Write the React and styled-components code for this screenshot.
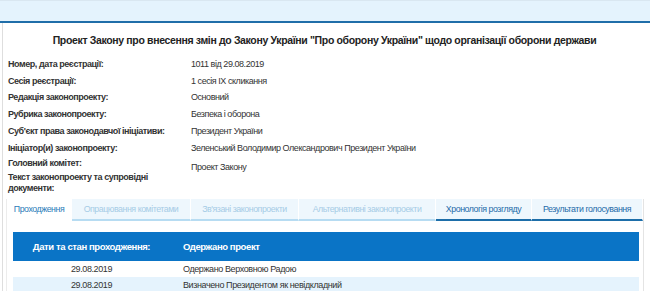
import React from 'react';
import styled, { createGlobalStyle } from 'styled-components';

const GlobalStyle = createGlobalStyle`
  html, body {
    margin: 0;
    padding: 0;
    background: #ffffff;
  }
  body {
    font-family: 'Liberation Sans', Arial, Helvetica, sans-serif;
    color: #333;
  }
`;

const Page = styled.div`
  width: 650px;
  height: 291px;
  overflow: hidden;
  background: #fff;
`;

const TopBar = styled.div`
  height: 20px;
  background: #e4f3fd;
  border-top: 1px solid #d9e7f1;
  border-bottom: 2px solid #1f6ea9;
`;

const Main = styled.div`
  margin-left: 2px;
  margin-right: 4px;
  border-left: 1px solid #dedede;
  padding: 10px 0 0 0;
`;

const Title = styled.h1`
  margin: 0 0 9px;
  text-align: center;
  font-size: 10.5px;
  letter-spacing: -0.35px;
  line-height: 14px;
  font-weight: bold;
  color: #222;
  white-space: nowrap;
`;

const InfoGrid = styled.div`
  display: grid;
  grid-template-columns: 183px 1fr;
  padding-left: 5px;
  font-size: 9px;
  letter-spacing: -0.45px;
`;

const Label = styled.div`
  font-weight: bold;
  color: #333;
  line-height: ${p => p.$lh || '16.7px'};
  padding-top: ${p => p.$offset || 0};
`;

const Value = styled.div`
  color: #333;
  line-height: 16.7px;
  padding-top: ${p => p.$offset || 0};
`;

const Stack = styled.div`
  display: flex;
  flex-direction: column;
`;

const TabsBox = styled.div`
  margin: 6px 2px 0 3px;
  border-left: 1px solid #ececec;
  border-right: 1px solid #e4e4e4;
`;

const TabStrip = styled.div`
  display: flex;
`;

const Tab = styled.div`
  flex: none;
  width: ${p => p.$w}px;
  height: 22px;
  box-sizing: border-box;
  display: flex;
  align-items: center;
  justify-content: center;
  font-size: 8.8px;
  letter-spacing: -0.45px;
  white-space: nowrap;
  border-right: 1px solid #fff;
  background: ${p => (p.$kind === 'active' ? '#fff' : '#eef7fd')};
  color: ${p =>
    p.$kind === 'active' ? '#2a7bb9' : p.$kind === 'dark' ? '#1d6aa9' : '#a6cce6'};
  border-bottom: 2px solid
    ${p => (p.$kind === 'active' ? '#fff' : p.$kind === 'dark' ? '#1d6ea9' : '#b7dcf2')};
`;

const Table = styled.div`
  margin: 11px 4px 0 6px;
  font-size: 9px;
  letter-spacing: -0.4px;
`;

const HeadRow = styled.div`
  display: grid;
  grid-template-columns: 157px 1fr;
  height: 29px;
  align-items: center;
  background: #0a74c6;
  color: #fff;
  font-weight: bold;
  font-size: 9.5px;
`;

const Row = styled.div`
  display: grid;
  grid-template-columns: 157px 1fr;
  height: 16px;
  align-items: center;
  background: ${p => (p.$alt ? '#e5f3fd' : '#fff')};
  color: #333;
`;

const DateCell = styled.div`
  text-align: center;
`;

const TextCell = styled.div`
  padding-left: 13px;
`;

const info = [
  ['Номер, дата реєстрації:', '1011 від 29.08.2019'],
  ['Сесія реєстрації:', '1 сесія IX скликання'],
  ['Редакція законопроекту:', 'Основний'],
  ['Рубрика законопроекту:', 'Безпека і оборона'],
  ["Суб'єкт права законодавчої ініціативи:", 'Президент України'],
  ['Ініціатор(и) законопроекту:', 'Зеленський Володимир Олександрович Президент України'],
];

const tabs = [
  ['Проходження', 65, 'active'],
  ['Опрацювання комітетами', 119, 'light'],
  ["Зв'язані законопроекти", 108, 'light'],
  ['Альтернативні законопроекти', 137, 'light'],
  ['Хронологія розгляду', 96, 'dark'],
  ['Результати голосування', 111, 'dark'],
];

const history = [
  ['29.08.2019', 'Одержано Верховною Радою'],
  ['29.08.2019', 'Визначено Президентом як невідкладний'],
];

export default function App() {
  return (
    <Page>
      <GlobalStyle />
      <TopBar />
      <Main>
        <Title>
          Проект Закону про внесення змін до Закону України "Про оборону України" щодо організації оборони держави
        </Title>
        <InfoGrid>
          {info.map(([l, v]) => (
            <React.Fragment key={l}>
              <Label>{l}</Label>
              <Value>{v}</Value>
            </React.Fragment>
          ))}
          <Stack>
            <Label $lh="14px">Головний комітет:</Label>
            <Label $lh="10.5px" $offset="2px">
              Текст законопроекту та супровідні
              <br />
              документи:
            </Label>
          </Stack>
          <Value $offset="2.5px">Проект Закону</Value>
        </InfoGrid>
        <TabsBox>
          <TabStrip>
            {tabs.map(([t, w, k]) => (
              <Tab key={t} $w={w} $kind={k}>
                {t}
              </Tab>
            ))}
          </TabStrip>
          <Table>
            <HeadRow>
              <DateCell>Дати та стан проходження:</DateCell>
              <TextCell>Одержано проект</TextCell>
            </HeadRow>
            {history.map(([d, t], i) => (
              <Row key={t} $alt={i % 2 === 1}>
                <DateCell>{d}</DateCell>
                <TextCell>{t}</TextCell>
              </Row>
            ))}
          </Table>
        </TabsBox>
      </Main>
    </Page>
  );
}
